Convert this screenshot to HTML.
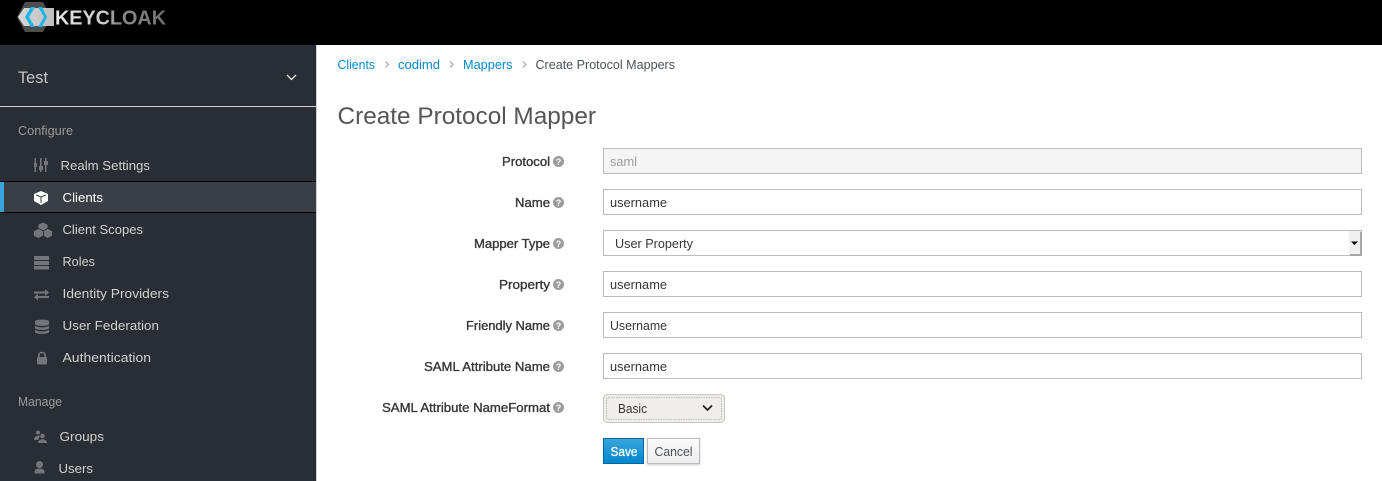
<!DOCTYPE html>
<html><head><meta charset="utf-8"><style>
html,body{margin:0;padding:0;background:#fff;width:1382px;height:481px;overflow:hidden}
svg{display:block}
text{font-family:"Liberation Sans",sans-serif;font-size:13px;white-space:pre}
.nav{fill:#d1d1d1}
.h{fill:#9c9c9c;font-size:12.5px}
.l{fill:#363636;font-size:12.5px;stroke:#363636;stroke-width:.35px}
.v{fill:#363636}
.a{fill:#0088ce}
.i{fill:#72767b}
.q{font-size:9px;font-weight:bold;fill:#fff;text-anchor:middle}
</style></head><body>
<svg width="1382" height="481" viewBox="0 0 1382 481" xmlns="http://www.w3.org/2000/svg">
<defs>
<linearGradient id="kc" gradientUnits="userSpaceOnUse" x1="55" x2="166" y1="0" y2="0"><stop offset="0" stop-color="#e8e8e8"/><stop offset=".45" stop-color="#c8c8c8"/><stop offset=".55" stop-color="#8c8c8c"/><stop offset="1" stop-color="#6f6f6f"/></linearGradient>
<linearGradient id="sv" x1="0" x2="0" y1="0" y2="1"><stop offset="0" stop-color="#39a5dc"/><stop offset="1" stop-color="#0088ce"/></linearGradient>
<linearGradient id="cn" x1="0" x2="0" y1="0" y2="1"><stop offset="0" stop-color="#fafafa"/><stop offset="1" stop-color="#ededed"/></linearGradient>
<linearGradient id="hx" x1="0" x2="1" y1="0" y2="0"><stop offset="0" stop-color="#d8d8d8"/><stop offset="1" stop-color="#bdbdbd"/></linearGradient>
<filter id="sh" x="-10%" y="-10%" width="120%" height="130%"><feDropShadow dx="0" dy="1" stdDeviation="1" flood-color="#000" flood-opacity=".2"/></filter>
</defs>

<!-- header -->
<rect width="1382" height="45" fill="#000"/>
<path d="M25 2H43L51 17L43 32H25L17 17Z" fill="#4d4d4d"/>
<path d="M18 17L24 8H54V26H24Z" fill="url(#hx)"/>
<path d="M31 7L25 17L31 27H35L29 17L35 7Z" fill="#19b5e8"/>
<path d="M38 7H42L47 17L42 27H38L44 17Z" fill="#19b5e8"/>
<text x="55" y="24.500" textLength="111" lengthAdjust="spacingAndGlyphs" style="font-size:20.5px;font-weight:bold" fill="url(#kc)">KEYCLOAK</text>

<!-- sidebar -->
<rect y="45" width="316" height="436" fill="#292e34"/>
<rect x="316" y="45" width="1" height="436" fill="#d1d1d1"/>
<text x="18" y="83" textLength="30" lengthAdjust="spacingAndGlyphs" style="font-size:17px" fill="#c4c5c6">Test</text>
<path d="M287 75L291.500 79.500L296 75" fill="none" stroke="#e8e8e8" stroke-width="1.300"/>
<rect y="106" width="316" height="1" fill="#d1d1d1"/>

<text class="h" x="18" y="135" textLength="55" lengthAdjust="spacingAndGlyphs">Configure</text>
<text class="h" x="18" y="406" textLength="44" lengthAdjust="spacingAndGlyphs">Manage</text>

<rect y="181" width="316" height="32" fill="#393f44"/>
<rect y="181" width="316" height="1" fill="#030303"/>
<rect y="212" width="316" height="1" fill="#030303"/>
<rect y="182" width="4" height="30" fill="#39a5dc"/>

<text class="nav" x="60.500" y="170" textLength="89.500" lengthAdjust="spacingAndGlyphs">Realm Settings</text>
<text x="62.500" y="202" textLength="40.500" lengthAdjust="spacingAndGlyphs" fill="#fff">Clients</text>
<text class="nav" x="62.500" y="234" textLength="80.500" lengthAdjust="spacingAndGlyphs">Client Scopes</text>
<text class="nav" x="62.500" y="266" textLength="32.500" lengthAdjust="spacingAndGlyphs">Roles</text>
<text class="nav" x="62.500" y="298" textLength="106.500" lengthAdjust="spacingAndGlyphs">Identity Providers</text>
<text class="nav" x="62.500" y="330" textLength="96.500" lengthAdjust="spacingAndGlyphs">User Federation</text>
<text class="nav" x="62.500" y="362" textLength="88.500" lengthAdjust="spacingAndGlyphs">Authentication</text>
<text class="nav" x="59.500" y="441" textLength="44.500" lengthAdjust="spacingAndGlyphs">Groups</text>
<text class="nav" x="58.500" y="473" textLength="34.500" lengthAdjust="spacingAndGlyphs">Users</text>

<!-- icons -->
<g class="i">
<rect x="34.500" y="158" width="1.500" height="14"/><rect x="40" y="158" width="1.500" height="14"/><rect x="45" y="158" width="1.500" height="14"/>
<rect x="34" y="163" width="3" height="4"/><rect x="39" y="166" width="4" height="4"/><rect x="44" y="161" width="4" height="4"/>
</g>
<path d="M41 191L48 194V201L41 205L34 201V194Z" fill="#fff"/>
<path d="M36 195L41 197L46 195M41 197V203" fill="none" stroke="#393f44" stroke-width="1"/>
<g class="i" stroke="#292e34" stroke-width=".8">
<path d="M43 222L48 224.500V229.500L43 232L38 229.500V224.500Z"/><path d="M38.500 228.500L43.500 231V236L38.500 238.500L33.500 236V231Z"/><path d="M47.500 228.500L52.500 231V236L47.500 238.500L43.500 236V231Z"/>
</g>
<g class="i">
<rect x="34" y="256" width="15" height="4"/><rect x="34" y="261" width="15" height="4"/><rect x="34" y="266" width="15" height="3.500"/>
<path d="M34 291.500H45V289L49 292.500L45 296V293.500H34Z"/><path d="M49 296H38V293.500L34 297L38 300.500V298H49Z"/>
<path d="M35 321.500C35 319 49 319 49 321.500V324C49 326.500 35 326.500 35 324Z"/><path d="M35 325.500C37 328 47 328 49 325.500V328C49 330.500 35 330.500 35 328Z"/><path d="M35 329.500C37 332 47 332 49 329.500V332C49 334.500 35 334.500 35 332Z"/>
<rect x="37" y="357" width="10" height="7.500" rx="1"/>
<path d="M38.800 357.500V355.500C38.800 351.500 45.200 351.500 45.200 355.500V357.500" fill="none" stroke="#72767b" stroke-width="1.600"/>
<circle cx="38" cy="432.500" r="2"/><path d="M34 440C34 436 38 435 40 436L38 440Z"/>
<circle cx="42.500" cy="436" r="2.300"/><path d="M38 443C38 438 47 438 47 443Z"/>
<circle cx="39.500" cy="464.500" r="3.500"/><path d="M34.500 473.500V471.500C34.500 467.500 44.500 467.500 44.500 471.500V473.500Z"/>
</g>

<!-- breadcrumb -->
<text class="a" x="337.500" y="69" textLength="37.500" lengthAdjust="spacingAndGlyphs">Clients</text>
<text class="a" x="398" y="69" textLength="42" lengthAdjust="spacingAndGlyphs">codimd</text>
<text class="a" x="463" y="69" textLength="49.500" lengthAdjust="spacingAndGlyphs">Mappers</text>
<text class="v" x="535.500" y="69" textLength="139.500" lengthAdjust="spacingAndGlyphs" style="fill:#4d5258">Create Protocol Mappers</text>
<g fill="none" stroke="#9c9c9c" stroke-width="1"><path d="M385.500 61.500L388.500 64.500L385.500 67.500"/><path d="M450 61.500L453 64.500L450 67.500"/><path d="M523 61.500L526 64.500L523 67.500"/></g>

<text x="337.500" y="124" textLength="258.500" lengthAdjust="spacingAndGlyphs" style="font-size:24px" fill="#555">Create Protocol Mapper</text>

<!-- labels -->
<text class="l" x="502" y="166" textLength="48" lengthAdjust="spacingAndGlyphs">Protocol</text>
<text class="l" x="515" y="207" textLength="35" lengthAdjust="spacingAndGlyphs">Name</text>
<text class="l" x="474" y="248" textLength="76" lengthAdjust="spacingAndGlyphs">Mapper Type</text>
<text class="l" x="499" y="289" textLength="51" lengthAdjust="spacingAndGlyphs">Property</text>
<text class="l" x="466" y="330" textLength="84" lengthAdjust="spacingAndGlyphs">Friendly Name</text>
<text class="l" x="424" y="371" textLength="126" lengthAdjust="spacingAndGlyphs">SAML Attribute Name</text>
<text class="l" x="382" y="412" textLength="168" lengthAdjust="spacingAndGlyphs">SAML Attribute NameFormat</text>

<g fill="#9c9c9c"><circle cx="558.500" cy="161.500" r="5.500"/><circle cx="558.500" cy="202.500" r="5.500"/><circle cx="558.500" cy="243.500" r="5.500"/><circle cx="558.500" cy="284.500" r="5.500"/><circle cx="558.500" cy="325.500" r="5.500"/><circle cx="558.500" cy="366.500" r="5.500"/><circle cx="558.500" cy="407.500" r="5.500"/></g>
<text class="q" x="558.500" y="164.800">?</text><text class="q" x="558.500" y="205.800">?</text><text class="q" x="558.500" y="246.800">?</text><text class="q" x="558.500" y="287.800">?</text><text class="q" x="558.500" y="328.800">?</text><text class="q" x="558.500" y="369.800">?</text><text class="q" x="558.500" y="410.800">?</text>

<!-- inputs -->
<g stroke="#bbb" stroke-width="1">
<rect x="603.500" y="148.500" width="758" height="25" fill="#f5f5f5"/>
<rect x="603.500" y="189.500" width="758" height="25" fill="#fff"/>
<rect x="603.500" y="230.500" width="758" height="25" fill="#fff"/>
<rect x="603.500" y="271.500" width="758" height="25" fill="#fff"/>
<rect x="603.500" y="312.500" width="758" height="25" fill="#fff"/>
<rect x="603.500" y="353.500" width="758" height="25" fill="#fff"/>
</g>
<rect x="1349" y="231" width="12" height="24" fill="#f0f0f0"/>
<path d="M1360 232H1362V256H1350V254H1360Z" fill="#a6a6a6"/>
<path d="M1351 241.500H1358L1354.500 245Z" fill="#000"/>

<text x="610" y="166" textLength="27" lengthAdjust="spacingAndGlyphs" fill="#9c9c9c">saml</text>
<text class="v" x="610" y="207" textLength="57" lengthAdjust="spacingAndGlyphs">username</text>
<text class="v" x="615" y="248" textLength="78" lengthAdjust="spacingAndGlyphs">User Property</text>
<text class="v" x="610" y="289" textLength="57" lengthAdjust="spacingAndGlyphs">username</text>
<text class="v" x="610" y="330" textLength="57" lengthAdjust="spacingAndGlyphs">Username</text>
<text class="v" x="610" y="371" textLength="57" lengthAdjust="spacingAndGlyphs">username</text>

<!-- select -->
<rect x="603.500" y="394.500" width="121" height="28" rx="4" fill="#f0eeec" stroke="#c9c5bf"/>
<rect x="606.500" y="397.500" width="115" height="22" rx="2" fill="none" stroke="#bdb9b3" stroke-dasharray="1.500 1"/>
<text x="618" y="413" textLength="29" lengthAdjust="spacingAndGlyphs" fill="#363636">Basic</text>
<path d="M703 405.500L707.500 410L712 405.500" fill="none" stroke="#222" stroke-width="1.800"/>

<!-- buttons -->
<rect x="603.500" y="438.500" width="40" height="25" fill="url(#sv)" stroke="#00659c"/>
<text x="610.500" y="456" textLength="27" lengthAdjust="spacingAndGlyphs" style="font-size:12.5px;stroke:#fff;stroke-width:.3px" fill="#fff">Save</text>
<rect x="647.500" y="438.500" width="52" height="25" fill="url(#cn)" stroke="#bbb" filter="url(#sh)"/>
<text x="654.500" y="456" textLength="38" lengthAdjust="spacingAndGlyphs" fill="#4d5258">Cancel</text>
</svg>
</body></html>
